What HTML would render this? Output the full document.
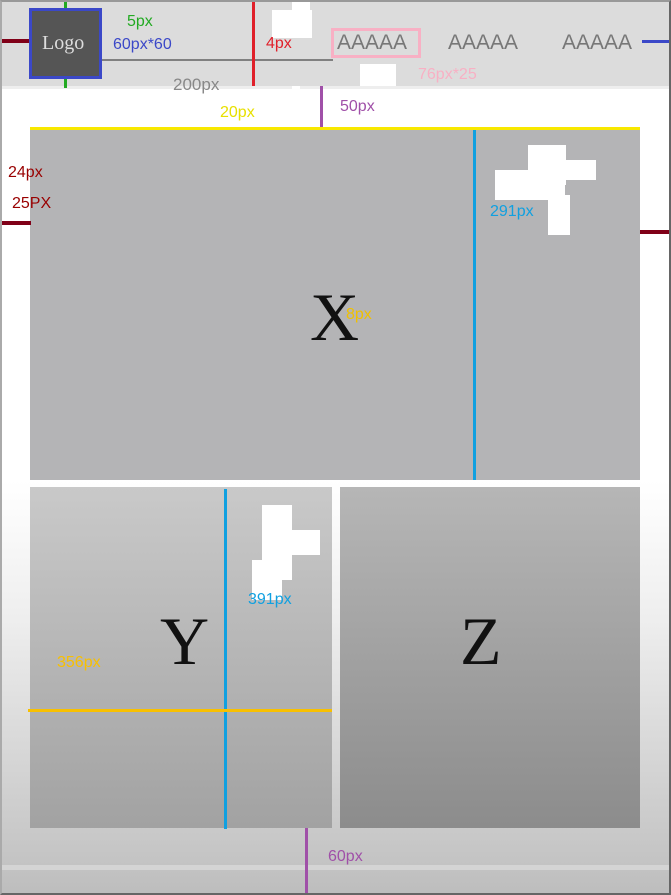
<!DOCTYPE html>
<html><head><meta charset="utf-8"><style>
*{margin:0;padding:0;box-sizing:border-box}
body{width:671px;height:895px;position:relative;overflow:hidden;font-family:"Liberation Sans",sans-serif;background:linear-gradient(#fff 0,#fff 480px,#eee 620px,#c4c4c4 860px,#bdbdbd 895px)}
.a{position:absolute}
.w{position:absolute;background:#fff}
.frame{left:0;top:0;width:671px;height:895px;border:2px solid #666;border-top-color:#999;border-left-color:#aaa}
.t{position:absolute;font-size:16px;white-space:nowrap}
.big{font-family:"Liberation Serif",serif;font-size:68px;color:#111}
</style></head><body>
<div class="a" style="left:0;top:0;width:671px;height:86px;background:#dcdcdc"></div>
<div class="a" style="left:0;top:86px;width:671px;height:3px;background:#eee"></div>
<div class="a" style="left:29px;top:8px;width:73px;height:71px;background:#555;border:3px solid #3b48c8"></div>
<div class="t" style="left:42px;top:32px;font-family:'Liberation Serif',serif;font-size:20px;color:#ddd">Logo</div>
<div class="a" style="left:0;top:39px;width:29px;height:4px;background:#800018"></div>
<div class="a" style="left:64px;top:0;width:3px;height:8px;background:#2a2"></div>
<div class="a" style="left:64px;top:79px;width:3px;height:9px;background:#2a2"></div>
<div class="a" style="left:102px;top:59px;width:231px;height:2px;background:#808080"></div>
<div class="a" style="left:252px;top:0;width:3px;height:86px;background:#e0202a"></div>
<div class="w" style="left:272px;top:10px;width:40px;height:28px"></div>
<div class="w" style="left:292px;top:0;width:18px;height:12px"></div>
<div class="t" style="left:127px;top:13px;color:#2a2">5px</div>
<div class="t" style="left:113px;top:36px;color:#3b48c8">60px*60</div>
<div class="t" style="left:266px;top:35px;color:#e0202a">4px</div>
<div class="t" style="left:173px;top:75px;color:#888;font-size:17px">200px</div>
<div class="w" style="left:292px;top:86px;width:8px;height:42px"></div>
<div class="t" style="left:220px;top:104px;color:#e8e000">20px</div>
<div class="a" style="left:331px;top:28px;width:90px;height:30px;border:3px solid #f8b0c4"></div>
<div class="t" style="left:337px;top:31px;font-size:21px;color:#777">AAAAA</div>
<div class="t" style="left:448px;top:31px;font-size:21px;color:#777">AAAAA</div>
<div class="t" style="left:562px;top:31px;font-size:21px;color:#777">AAAAA</div>
<div class="a" style="left:642px;top:40px;width:29px;height:3px;background:#3b48c8"></div>
<div class="w" style="left:360px;top:64px;width:36px;height:22px"></div>
<div class="t" style="left:418px;top:66px;color:#f8b0c4">76px*25</div>
<div class="a" style="left:320px;top:86px;width:3px;height:42px;background:#a050a8"></div>
<div class="t" style="left:340px;top:98px;color:#a050a8">50px</div>
<div class="a" style="left:30px;top:127px;width:610px;height:3px;background:#f8e800"></div>
<div class="a" style="left:30px;top:130px;width:610px;height:350px;background:#b4b4b6"></div>
<div class="w" style="left:528px;top:145px;width:38px;height:40px"></div>
<div class="w" style="left:548px;top:160px;width:48px;height:20px"></div>
<div class="w" style="left:495px;top:170px;width:70px;height:30px"></div>
<div class="w" style="left:548px;top:195px;width:22px;height:40px"></div>
<div class="a" style="left:473px;top:130px;width:3px;height:350px;background:#10a0e0"></div>
<div class="t" style="left:490px;top:203px;color:#10a0e0">291px</div>
<div class="t big" style="left:310px;top:278px">X</div>
<div class="t" style="left:346px;top:306px;color:#f0c000">8px</div>
<div class="a" style="left:0;top:221px;width:31px;height:4px;background:#800018"></div>
<div class="a" style="left:640px;top:230px;width:31px;height:4px;background:#800018"></div>
<div class="t" style="left:8px;top:164px;color:#900">24px</div>
<div class="t" style="left:12px;top:195px;color:#900">25PX</div>
<div class="a" style="left:30px;top:487px;width:302px;height:341px;background:linear-gradient(#c9c9c9,#a2a2a2)"></div>
<div class="a" style="left:340px;top:487px;width:300px;height:341px;background:linear-gradient(#b6b6b6,#8c8c8c)"></div>
<div class="w" style="left:262px;top:505px;width:30px;height:75px"></div>
<div class="w" style="left:285px;top:530px;width:35px;height:25px"></div>
<div class="w" style="left:252px;top:560px;width:30px;height:40px"></div>
<div class="a" style="left:224px;top:489px;width:3px;height:340px;background:#10a0e0"></div>
<div class="a" style="left:28px;top:709px;width:304px;height:3px;background:#f8c000"></div>
<div class="t" style="left:248px;top:591px;color:#10a0e0">391px</div>
<div class="t" style="left:57px;top:654px;color:#f8c000">356px</div>
<div class="t big" style="left:160px;top:602px">Y</div>
<div class="t big" style="left:460px;top:602px">Z</div>
<div class="a" style="left:0;top:865px;width:671px;height:5px;background:#d4d4d4"></div>
<div class="a" style="left:305px;top:828px;width:3px;height:67px;background:#a050a8"></div>
<div class="t" style="left:328px;top:848px;color:#a050a8">60px</div>
<div class="a frame"></div>
</body></html>
